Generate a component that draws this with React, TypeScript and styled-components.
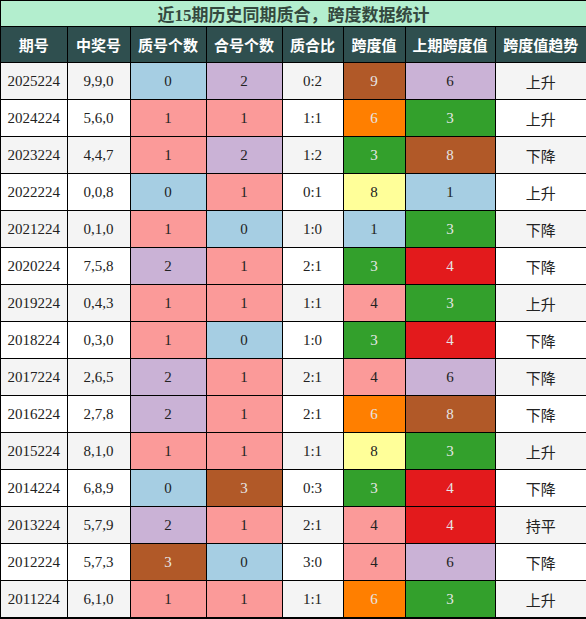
import React from 'react';
import styled, { createGlobalStyle } from 'styled-components';

const GlobalStyle = createGlobalStyle`
  body {
    margin: 0;
    background: #ffffff;
    font-family: "Liberation Serif", "Noto Sans CJK SC", serif;
  }
`;

const SCPage = styled.div`
  width: 586px;
  height: 619px;
  overflow: hidden;
`;

const SCTable = styled.table`
  border-collapse: collapse;
  table-layout: fixed;
  width: 587px;
  margin: -1px 0 0 -1px;
  border: 2px solid #000;
`;

const SCTitle = styled.th`
  height: 24px;
  padding: 0;
  background: #b3eece;
  color: #34493f;
  font-size: 17px;
  font-weight: bold;
  font-family: "Liberation Serif", "Noto Sans CJK SC", serif;
  border: 1px solid #000;
`;

const SCHead = styled.th`
  height: 35px;
  padding: 0;
  background: #2f4f4f;
  color: #ffffff;
  font-size: 15px;
  font-weight: bold;
  font-family: "Noto Sans CJK SC", sans-serif;
  border: 1px solid #000;
`;

const SCCell = styled.td<{ $bg?: string; $light?: boolean; $cjk?: boolean }>`
  height: 36px;
  padding: 0;
  text-align: center;
  font-size: 15px;
  font-family: ${p => (p.$cjk ? '"Noto Sans CJK SC", sans-serif' : '"Liberation Serif", serif')};
  color: ${p => (p.$light ? '#e6e6e6' : '#222')};
  background: ${p => p.$bg || 'transparent'};
  border: 1px solid #000;
`;

const SCRow = styled.tr<{ $odd: boolean }>`
  background: ${p => (p.$odd ? '#f4f4f4' : '#ffffff')};
`;

const palette: Record<string, { bg: string; light: boolean }> = {
  '0': { bg: '#a6cee3', light: false },
  '1': { bg: '#fb9a99', light: false },
  '2': { bg: '#cab2d6', light: false },
  '3': { bg: '#b15928', light: true },
};

const spanColor: Record<string, { bg: string; light: boolean }> = {
  '1': { bg: '#a6cee3', light: false },
  '3': { bg: '#33a02c', light: true },
  '4': { bg: '#fb9a99', light: false },
  '6': { bg: '#cab2d6', light: false },
  '8': { bg: '#ffff99', light: false },
  '9': { bg: '#b15928', light: true },
};

const spanColorPrev: Record<string, { bg: string; light: boolean }> = {
  '1': { bg: '#a6cee3', light: false },
  '3': { bg: '#33a02c', light: true },
  '4': { bg: '#e31a1c', light: true },
  '6': { bg: '#cab2d6', light: false },
  '8': { bg: '#b15928', light: true },
};

const spanCurOverride: Record<string, { bg: string; light: boolean }> = {
  '6': { bg: '#ff7f00', light: true },
};

const rows = [
  ['2025224', '9,9,0', '0', '2', '0:2', '9', '6', '上升'],
  ['2024224', '5,6,0', '1', '1', '1:1', '6', '3', '上升'],
  ['2023224', '4,4,7', '1', '2', '1:2', '3', '8', '下降'],
  ['2022224', '0,0,8', '0', '1', '0:1', '8', '1', '上升'],
  ['2021224', '0,1,0', '1', '0', '1:0', '1', '3', '下降'],
  ['2020224', '7,5,8', '2', '1', '2:1', '3', '4', '下降'],
  ['2019224', '0,4,3', '1', '1', '1:1', '4', '3', '上升'],
  ['2018224', '0,3,0', '1', '0', '1:0', '3', '4', '下降'],
  ['2017224', '2,6,5', '2', '1', '2:1', '4', '6', '下降'],
  ['2016224', '2,7,8', '2', '1', '2:1', '6', '8', '下降'],
  ['2015224', '8,1,0', '1', '1', '1:1', '8', '3', '上升'],
  ['2014224', '6,8,9', '0', '3', '0:3', '3', '4', '下降'],
  ['2013224', '5,7,9', '2', '1', '2:1', '4', '4', '持平'],
  ['2012224', '5,7,3', '3', '0', '3:0', '4', '6', '下降'],
  ['2011224', '6,1,0', '1', '1', '1:1', '6', '3', '上升'],
];

const widths = [67, 63, 76, 76, 61, 62, 90, 92];
const heads = ['期号', '中奖号', '质号个数', '合号个数', '质合比', '跨度值', '上期跨度值', '跨度值趋势'];

const App = () => {
  return (
    <SCPage>
      <GlobalStyle />
      <SCTable>
        <colgroup>
          {widths.map((w, i) => <col key={i} style={{ width: w }} />)}
        </colgroup>
        <thead>
          <tr>
            <SCTitle colSpan={8}>近15期历史同期质合，跨度数据统计</SCTitle>
          </tr>
          <tr>
            {heads.map(h => <SCHead key={h}>{h}</SCHead>)}
          </tr>
        </thead>
        <tbody>
          {rows.map((r, i) => {
            const p = palette[r[2]];
            const c = palette[r[3]];
            const s = spanCurOverride[r[5]] || spanColor[r[5]];
            const ps = spanColorPrev[r[6]];
            return (
              <SCRow key={r[0]} $odd={i % 2 === 0}>
                <SCCell>{r[0]}</SCCell>
                <SCCell>{r[1]}</SCCell>
                <SCCell $bg={p.bg} $light={p.light}>{r[2]}</SCCell>
                <SCCell $bg={c.bg} $light={c.light}>{r[3]}</SCCell>
                <SCCell>{r[4]}</SCCell>
                <SCCell $bg={s.bg} $light={s.light}>{r[5]}</SCCell>
                <SCCell $bg={ps.bg} $light={ps.light}>{r[6]}</SCCell>
                <SCCell $cjk>{r[7]}</SCCell>
              </SCRow>
            );
          })}
        </tbody>
      </SCTable>
    </SCPage>
  );
};

export default App;
